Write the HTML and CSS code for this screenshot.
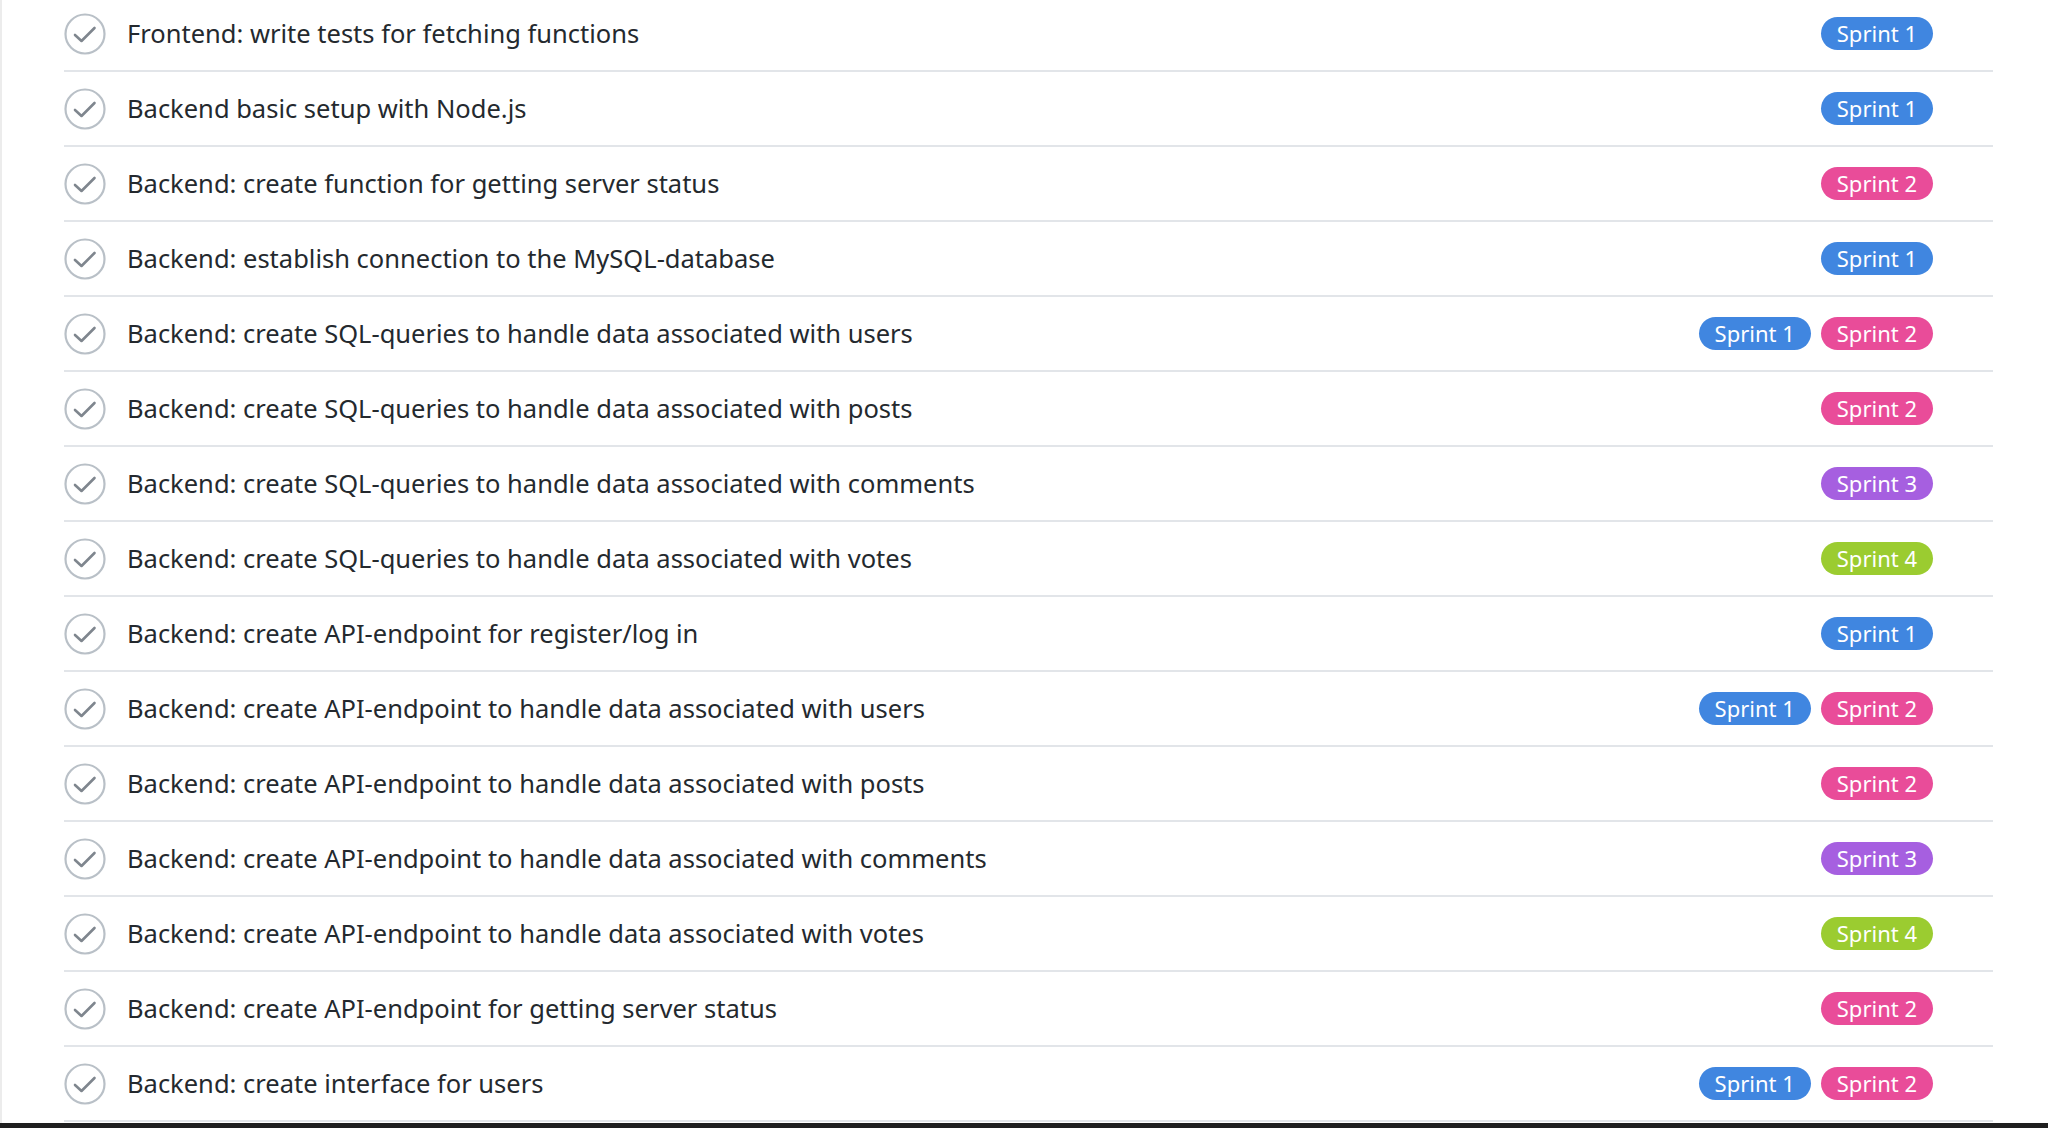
FILE: index.html
```html
<!DOCTYPE html>
<html lang="en">
<head>
<meta charset="utf-8">
<title>Tasks</title>
<link rel="stylesheet" href="styles.css">
</head>
<body>
<div class="screen">
  <div class="viewport">
    <ul class="tasks">
      <li class="task"><svg class="check" viewBox="0 0 42 42"><circle cx="21" cy="21" r="19.5"/><path d="M11 22 L17.5 28 L30.5 15"/></svg><span class="title">Frontend: write tests for fetching functions</span><span class="tags"><span class="tag s1">Sprint 1</span></span></li>
      <li class="task"><svg class="check" viewBox="0 0 42 42"><circle cx="21" cy="21" r="19.5"/><path d="M11 22 L17.5 28 L30.5 15"/></svg><span class="title">Backend basic setup with Node.js</span><span class="tags"><span class="tag s1">Sprint 1</span></span></li>
      <li class="task"><svg class="check" viewBox="0 0 42 42"><circle cx="21" cy="21" r="19.5"/><path d="M11 22 L17.5 28 L30.5 15"/></svg><span class="title">Backend: create function for getting server status</span><span class="tags"><span class="tag s2">Sprint 2</span></span></li>
      <li class="task"><svg class="check" viewBox="0 0 42 42"><circle cx="21" cy="21" r="19.5"/><path d="M11 22 L17.5 28 L30.5 15"/></svg><span class="title">Backend: establish connection to the MySQL-database</span><span class="tags"><span class="tag s1">Sprint 1</span></span></li>
      <li class="task"><svg class="check" viewBox="0 0 42 42"><circle cx="21" cy="21" r="19.5"/><path d="M11 22 L17.5 28 L30.5 15"/></svg><span class="title">Backend: create SQL-queries to handle data associated with users</span><span class="tags"><span class="tag s1">Sprint 1</span><span class="tag s2">Sprint 2</span></span></li>
      <li class="task"><svg class="check" viewBox="0 0 42 42"><circle cx="21" cy="21" r="19.5"/><path d="M11 22 L17.5 28 L30.5 15"/></svg><span class="title">Backend: create SQL-queries to handle data associated with posts</span><span class="tags"><span class="tag s2">Sprint 2</span></span></li>
      <li class="task"><svg class="check" viewBox="0 0 42 42"><circle cx="21" cy="21" r="19.5"/><path d="M11 22 L17.5 28 L30.5 15"/></svg><span class="title">Backend: create SQL-queries to handle data associated with comments</span><span class="tags"><span class="tag s3">Sprint 3</span></span></li>
      <li class="task"><svg class="check" viewBox="0 0 42 42"><circle cx="21" cy="21" r="19.5"/><path d="M11 22 L17.5 28 L30.5 15"/></svg><span class="title">Backend: create SQL-queries to handle data associated with votes</span><span class="tags"><span class="tag s4">Sprint 4</span></span></li>
      <li class="task"><svg class="check" viewBox="0 0 42 42"><circle cx="21" cy="21" r="19.5"/><path d="M11 22 L17.5 28 L30.5 15"/></svg><span class="title">Backend: create API-endpoint for register/log in</span><span class="tags"><span class="tag s1">Sprint 1</span></span></li>
      <li class="task"><svg class="check" viewBox="0 0 42 42"><circle cx="21" cy="21" r="19.5"/><path d="M11 22 L17.5 28 L30.5 15"/></svg><span class="title">Backend: create API-endpoint to handle data associated with users</span><span class="tags"><span class="tag s1">Sprint 1</span><span class="tag s2">Sprint 2</span></span></li>
      <li class="task"><svg class="check" viewBox="0 0 42 42"><circle cx="21" cy="21" r="19.5"/><path d="M11 22 L17.5 28 L30.5 15"/></svg><span class="title">Backend: create API-endpoint to handle data associated with posts</span><span class="tags"><span class="tag s2">Sprint 2</span></span></li>
      <li class="task"><svg class="check" viewBox="0 0 42 42"><circle cx="21" cy="21" r="19.5"/><path d="M11 22 L17.5 28 L30.5 15"/></svg><span class="title">Backend: create API-endpoint to handle data associated with comments</span><span class="tags"><span class="tag s3">Sprint 3</span></span></li>
      <li class="task"><svg class="check" viewBox="0 0 42 42"><circle cx="21" cy="21" r="19.5"/><path d="M11 22 L17.5 28 L30.5 15"/></svg><span class="title">Backend: create API-endpoint to handle data associated with votes</span><span class="tags"><span class="tag s4">Sprint 4</span></span></li>
      <li class="task"><svg class="check" viewBox="0 0 42 42"><circle cx="21" cy="21" r="19.5"/><path d="M11 22 L17.5 28 L30.5 15"/></svg><span class="title">Backend: create API-endpoint for getting server status</span><span class="tags"><span class="tag s2">Sprint 2</span></span></li>
      <li class="task"><svg class="check" viewBox="0 0 42 42"><circle cx="21" cy="21" r="19.5"/><path d="M11 22 L17.5 28 L30.5 15"/></svg><span class="title">Backend: create interface for users</span><span class="tags"><span class="tag s1">Sprint 1</span><span class="tag s2">Sprint 2</span></span></li>
    </ul>
  </div>
  <div class="taskbar"></div>
</div>
</body>
</html>
```

FILE: styles.css
```css
html, body {
  margin: 0;
  padding: 0;
  background: #ffffff;
}

body {
  font-family: "Noto Sans", "Open Sans", "Liberation Sans", sans-serif;
  color: #24292e;
}

.screen {
  height: 1128px;
  display: flex;
  flex-direction: column;
  overflow: hidden;
}

.viewport {
  flex: 1;
  overflow: hidden;
  border-left: 2px solid #ececec;
}

.tasks {
  list-style: none;
  margin: -3px 55px 0 62px;
  padding: 0;
}

.task {
  display: flex;
  align-items: center;
  height: 73px;
  border-bottom: 2px solid #e2e5e9;
}

.check {
  width: 42px;
  height: 42px;
  flex: none;
  margin-right: 21px;
  fill: none;
}

.check circle {
  stroke: #b9c0c7;
  stroke-width: 2.2;
}

.check path {
  stroke: #7f868e;
  stroke-width: 2.6;
  stroke-linecap: round;
  stroke-linejoin: round;
}

.title {
  flex: 1;
  font-size: 25.5px;
  color: #24292e;
  white-space: nowrap;
  padding-bottom: 1px;
}

.tags {
  display: flex;
  gap: 10px;
  margin-right: 60px;
  padding-bottom: 1px;
}

.tag {
  display: inline-block;
  height: 33px;
  line-height: 33px;
  padding: 0 16px;
  border-radius: 17px;
  color: #ffffff;
  font-size: 22px;
  white-space: nowrap;
}

.s1 { background: #4086e0; }
.s2 { background: #e94c99; }
.s3 { background: #a65fe0; }
.s4 { background: #9bcc30; }

.taskbar {
  height: 5px;
  flex: none;
  background: #1f1f1f;
}
```
